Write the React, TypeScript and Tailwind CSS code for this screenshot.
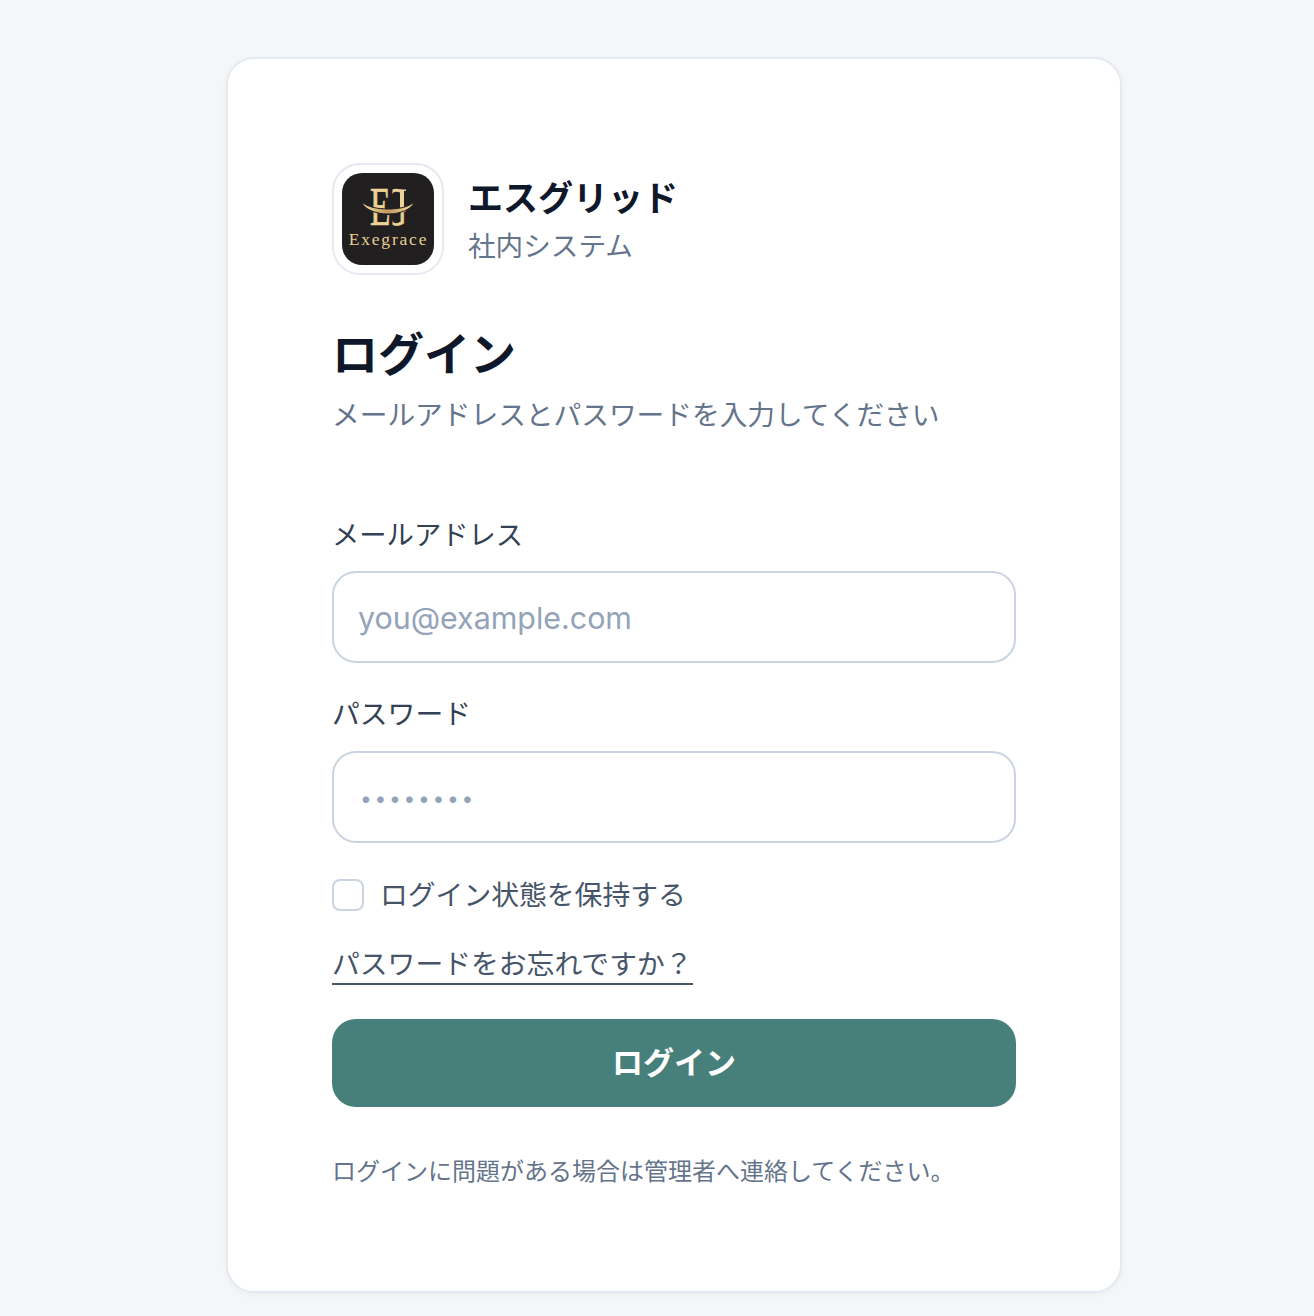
import React from "react";

const jp = "font-['Inter','Noto_Sans_CJK_JP',sans-serif]";

function Logo() {
  return (
    <svg viewBox="0 0 92 92" className="block h-full w-full">
      <defs>
        <linearGradient id="swoosh" x1="0" y1="0" x2="1" y2="0">
          <stop offset="0" stopColor="#f2dca0" />
          <stop offset="0.5" stopColor="#c39a5b" />
          <stop offset="1" stopColor="#f2dca0" />
        </linearGradient>
        <clipPath id="gRight">
          <rect x="50.5" y="10" width="20" height="50" />
        </clipPath>
      </defs>
      <rect width="92" height="92" fill="#211f1f" />
      <text transform="translate(28 52) scale(0.62 1)" fontFamily="Liberation Serif" fontSize="54" fill="#ecd298" stroke="#ecd298" strokeWidth="0.7">E</text>
      <g clipPath="url(#gRight)">
        <text transform="translate(43 52) scale(0.55 1)" fontFamily="Liberation Serif" fontSize="54" fill="#ecd298" stroke="#ecd298" strokeWidth="0.7">G</text>
      </g>
      <rect x="51" y="16.5" width="13" height="1.4" fill="#ecd298" />
      <rect x="58" y="17" width="4" height="20" fill="#ecd298" />
      <path d="M20 29 C25 34 36 36 46 36 C57 36 67 34 72 29 C70 36.5 58 41 46 41 C34 41 22 36.5 20 29 Z" fill="url(#swoosh)" stroke="#211f1f" strokeWidth="1" />
      <text x="46.5" y="72" fontFamily="Liberation Serif" fontSize="17.5" letterSpacing="1.8" fill="#e8cf94" textAnchor="middle">Exegrace</text>
    </svg>
  );
}

export default function App() {
  return (
    <div className={`min-h-[1316px] bg-[#f4f6f8] pt-[57px] ${jp}`}>
      <div className="ml-[226px] box-border h-[1236px] w-[896px] rounded-[28px] border-2 border-[#e5e9f0] bg-white px-[104px] pt-[104px] shadow-[0_2px_6px_rgba(15,23,42,0.04)]">
        <div className="flex items-center gap-[24px]">
          <div className="box-border h-[112px] w-[112px] rounded-[28px] border-2 border-[#e5e9f2] bg-white p-2">
            <div className="h-full w-full overflow-hidden rounded-[20px]">
              <Logo />
            </div>
          </div>
          <div className="flex flex-col pt-[3px]">
            <div className="text-[35px] font-bold leading-[50px] text-[#0f172a]">エスグリッド</div>
            <div className="text-[27.6px] leading-[46px] text-[#64748b]">社内システム</div>
          </div>
        </div>

        <h1 className="mt-[47px] text-[46px] font-bold leading-[64px] text-[#0f172a]">ログイン</h1>
        <p className="mt-[7px] text-[27.7px] leading-[44px] text-[#64748b]">メールアドレスとパスワードを入力してください</p>

        <label className="mt-[77px] block text-[27.3px] leading-[44px] text-[#334155]">メールアドレス</label>
        <input
          type="email"
          placeholder="you@example.com"
          className="mt-[13px] box-border block h-[92px] w-[684px] rounded-[24px] border-2 border-[#cbd5e1] bg-white pl-[24px] pr-[25px] pt-[2px] text-[30.4px] text-[#0f172a] outline-none placeholder:text-[#94a3b8]"
        />

        <label className="mt-[29px] block text-[27.8px] leading-[44px] text-[#334155]">パスワード</label>
        <input
          type="password"
          placeholder="••••••••"
          className="mt-[15px] box-border block h-[92px] w-[684px] rounded-[24px] border-2 border-[#cbd5e1] bg-white pl-[26px] pr-[25px] pb-[4px] text-[30.4px] text-[#0f172a] outline-none placeholder:text-[21px] placeholder:tracking-[2.7px] placeholder:text-[#94a3b8]"
        />

        <label className="mt-[30px] flex items-center gap-[16px]">
          <span className="box-border block h-[32px] w-[32px] rounded-[8px] border-2 border-[#cbd5e1] bg-white" />
          <span className="text-[27.8px] leading-[44px] text-[#475569]">ログイン状態を保持する</span>
        </label>

        <div className="mt-[30px]">
          <a className="inline-block border-b-2 border-[#475569] pb-[1px] text-[27.8px] leading-[35px] text-[#475569]">パスワードをお忘れですか？</a>
        </div>

        <button className="mt-[34px] block h-[88px] w-[684px] rounded-[24px] bg-[#47807a] text-[31px] font-bold text-white">ログイン</button>

        <p className="mt-[45px] text-[24px] leading-[40px] text-[#64748b]">ログインに問題がある場合は管理者へ連絡してください。</p>
      </div>
    </div>
  );
}
